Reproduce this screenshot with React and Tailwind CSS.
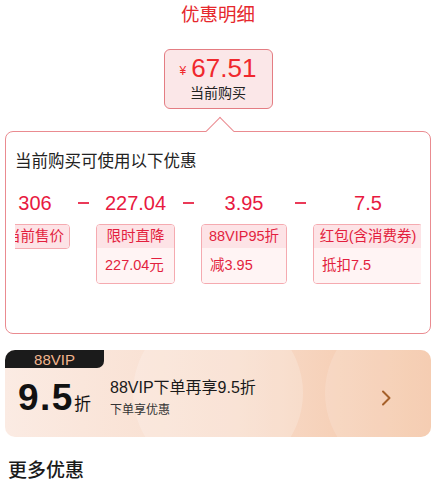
import React from "react";

const cols = [
  { num: "306", w: "w-[70px]", head: "当前售价", body: null },
  { num: "227.04", w: "w-[79px]", head: "限时直降", body: "227.04元" },
  { num: "3.95", w: "w-[86px]", head: "88VIP95折", body: "减3.95" },
  { num: "7.5", w: "w-[110px]", head: "红包(含消费券)", body: "抵扣7.5" },
];

const Tag = ({ head, body }) => (
  <div className="w-full rounded-[4px] border border-[#f5aab0] overflow-hidden">
    <div className="h-[23px] bg-[#fde3e6] flex items-center justify-center text-[14.5px] text-[#e31f3e] whitespace-nowrap">
      {head}
    </div>
    {body && (
      <div className="h-[35px] bg-[#fff4f4] flex items-center pl-[8px] text-[14.5px] text-[#e31f3e] whitespace-nowrap">
        {body}
      </div>
    )}
  </div>
);

const Dash = () => (
  <div className="w-[26px] shrink-0 h-[40px] flex items-center justify-center">
    <div className="w-[11px] h-[2px] bg-[#ea3a58]" />
  </div>
);

export default function App() {
  return (
    <div className="w-[436px] h-[501px] bg-white overflow-hidden font-['Liberation_Sans','Noto_Sans_CJK_SC',sans-serif]">
      <div className="h-[30px] flex items-center justify-center text-[18.5px] text-[#e6282d]">
        优惠明细
      </div>

      <div className="mt-[19px] mx-auto w-[109px] h-[60px] rounded-[6px] border border-[#e47d83] bg-[#fbe7e8] flex flex-col items-center pt-[3px]">
        <div className="h-[30px] flex items-center text-[#f0282d]">
          <span className="text-[12px] mr-[5px] mt-[6px]">¥</span>
          <span className="text-[26px]">67.51</span>
        </div>
        <div className="h-[20px] flex items-center text-[14px] text-[#222]">当前购买</div>
      </div>

      <div className="relative mt-[22px] mx-[5px] h-[203px] rounded-[8px] border border-[#ea8b90] bg-white px-[9px]">
        <div className="absolute left-[204px] top-[-11px] w-[20px] h-[20px] rotate-45 border-l border-t border-[#ea8b90] bg-white" />
        <div className="relative pt-[17px] h-[41px] flex items-center text-[16.5px] text-[#222]">
          当前购买可使用以下优惠
        </div>
        <div className="relative mt-[10px] overflow-hidden">
          <div className="flex ml-[-15px]">
            {cols.map((c, i) => (
              <React.Fragment key={c.num}>
                {i > 0 && <Dash />}
                <div className={`${c.w} shrink-0 flex flex-col items-center`}>
                  <div className="h-[40px] flex items-center text-[20px] text-[#e8193f]">{c.num}</div>
                  <div className="mt-[1px] w-full">
                    <Tag head={c.head} body={c.body} />
                  </div>
                </div>
              </React.Fragment>
            ))}
          </div>
        </div>
      </div>

      <div className="relative mt-[16px] mx-[5px] h-[87px] rounded-[10px] overflow-hidden bg-[linear-gradient(90deg,#fbebe3_0%,#f8dccb_55%,#f4c5a5_100%)]">
        <div className="absolute left-[128px] top-[-42px] w-[170px] h-[170px] rounded-full bg-white/20" />
        <div className="absolute left-[320px] top-[-42px] w-[170px] h-[170px] rounded-full bg-white/15" />
        <div className="relative w-[99px] h-[18px] bg-[#1b1b1b] rounded-br-[7px] flex items-center justify-center text-[15px] leading-none text-[#f2b68f]">
          88VIP
        </div>
        <div className="relative flex items-center h-[60px] pl-[13px] pr-[40px]">
          <div className="flex items-baseline w-[92px]">
            <span className="text-[37px] font-bold leading-none tracking-[1.5px] text-[#111]">9.5</span>
            <span className="text-[17px] text-[#111]">折</span>
          </div>
          <div className="flex flex-col">
            <span className="text-[16px] leading-[22px] text-[#1a1a1a]">88VIP下单再享9.5折</span>
            <span className="text-[12px] leading-[18px] text-[#333] mt-[2px]">下单享优惠</span>
          </div>
          <svg className="ml-auto" width="10" height="16" viewBox="0 0 10 16" fill="none">
            <polyline points="2,1.5 8.5,8 2,14.5" stroke="#a5602a" strokeWidth="2" strokeLinecap="round" strokeLinejoin="round" />
          </svg>
        </div>
      </div>

      <div className="mt-[20px] ml-[8px] h-[28px] flex items-center text-[19px] font-medium text-[#1a1a1a]">
        更多优惠
      </div>
    </div>
  );
}
